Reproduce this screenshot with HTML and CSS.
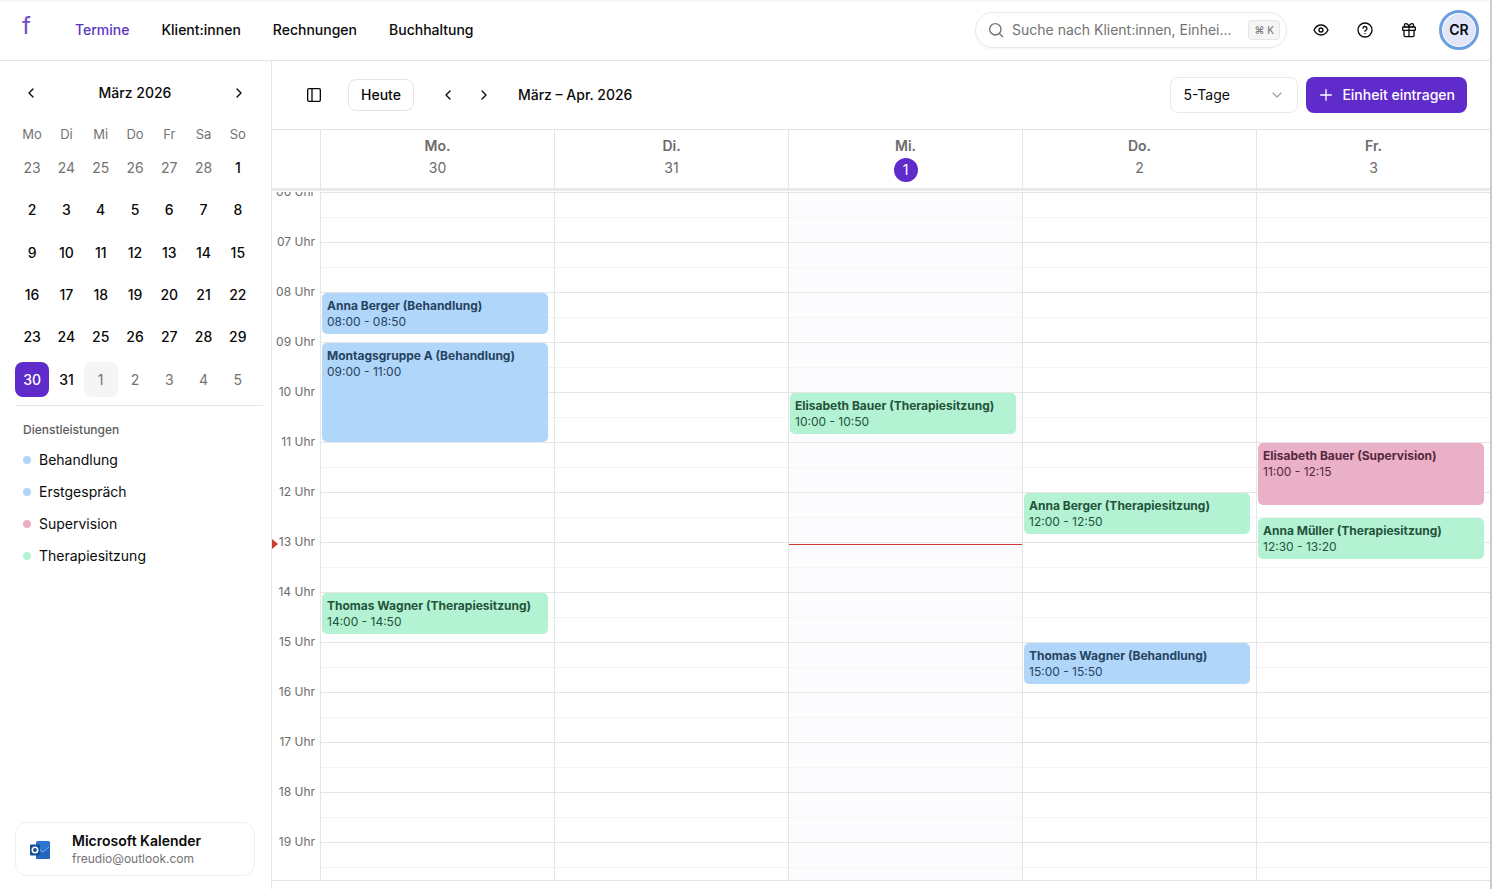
FILE: index.html
```html
<!DOCTYPE html>
<html lang="de">
<head>
    <meta charset="UTF-8">
    <meta name="viewport" content="width=device-width, initial-scale=1.0">
    <title>Termine</title>
    <link rel="stylesheet" href="styles.css">
</head>
<body>
    <header class="topbar">
        <a class="logo" href="#">f</a>
        <nav class="main-nav">
            <a class="active" href="#">Termine</a>
            <a href="#">Klient:innen</a>
            <a href="#">Rechnungen</a>
            <a href="#">Buchhaltung</a>
        </nav>
        <label class="search">
            <svg class="icon" viewBox="0 0 24 24"><circle cx="11" cy="11" r="8.5"/><path d="M17.2 17.2 22 22"/></svg>
            <input type="text" placeholder="Suche nach Klient:innen, Einhei..." aria-label="Suche">
            <kbd>⌘ K</kbd>
        </label>
        <div class="top-actions">
            <button class="icon-btn" aria-label="Ansicht">
                <svg class="icon" viewBox="0 0 24 24"><path d="M1.500 12s3.800-7.500 10.500-7.500S22.500 12 22.500 12s-3.800 7.500-10.500 7.500S1.500 12 1.500 12Z"/><circle cx="12" cy="12" r="3"/></svg>
            </button>
            <button class="icon-btn" aria-label="Hilfe">
                <svg class="icon" viewBox="0 0 24 24"><circle cx="12" cy="12" r="10.500"/><path d="M9 9a3 3 0 0 1 5.900 1c0 2-2.900 2.500-2.900 4"/><path d="M12 17.500h.01"/></svg>
            </button>
            <button class="icon-btn" aria-label="Neuigkeiten">
                <svg class="icon" viewBox="0 0 24 24"><rect x="2.500" y="7.500" width="19" height="5" rx="1"/><path d="M12 7.500V22M4.500 12.500V20a2 2 0 0 0 2 2h11a2 2 0 0 0 2-2v-7.500M7.500 7.500a2.500 2.500 0 0 1 0-5C11 2.500 12 7.500 12 7.500s1-5 4.500-5a2.500 2.500 0 0 1 0 5"/></svg>
            </button>
        </div>
        <button class="avatar">CR</button>
    </header>

    <div class="layout">
        <aside class="sidebar">
            <div class="month-nav">
                <button class="icon-btn" aria-label="Vorheriger Monat"><svg class="icon" viewBox="0 0 24 24"><path d="m15 6-6 6 6 6"/></svg></button>
                <h2>März 2026</h2>
                <button class="icon-btn" aria-label="Nächster Monat"><svg class="icon" viewBox="0 0 24 24"><path d="m9 6 6 6-6 6"/></svg></button>
            </div>
            <table class="mini-cal">
                <thead>
                    <tr><th>Mo</th><th>Di</th><th>Mi</th><th>Do</th><th>Fr</th><th>Sa</th><th>So</th></tr>
                </thead>
                <tbody>
                    <tr>
                        <td><button class="out">23</button></td><td><button class="out">24</button></td><td><button class="out">25</button></td><td><button class="out">26</button></td><td><button class="out">27</button></td><td><button class="out">28</button></td><td><button>1</button></td>
                    </tr>
                    <tr>
                        <td><button>2</button></td><td><button>3</button></td><td><button>4</button></td><td><button>5</button></td><td><button>6</button></td><td><button>7</button></td><td><button>8</button></td>
                    </tr>
                    <tr>
                        <td><button>9</button></td><td><button>10</button></td><td><button>11</button></td><td><button>12</button></td><td><button>13</button></td><td><button>14</button></td><td><button>15</button></td>
                    </tr>
                    <tr>
                        <td><button>16</button></td><td><button>17</button></td><td><button>18</button></td><td><button>19</button></td><td><button>20</button></td><td><button>21</button></td><td><button>22</button></td>
                    </tr>
                    <tr>
                        <td><button>23</button></td><td><button>24</button></td><td><button>25</button></td><td><button>26</button></td><td><button>27</button></td><td><button>28</button></td><td><button>29</button></td>
                    </tr>
                    <tr>
                        <td><button class="selected">30</button></td><td><button>31</button></td><td><button class="out today">1</button></td><td><button class="out">2</button></td><td><button class="out">3</button></td><td><button class="out">4</button></td><td><button class="out">5</button></td>
                    </tr>
                </tbody>
            </table>
            <section class="services">
                <h3>Dienstleistungen</h3>
                <ul>
                    <li class="dot-blue">Behandlung</li>
                    <li class="dot-blue">Erstgespräch</li>
                    <li class="dot-pink">Supervision</li>
                    <li class="dot-green">Therapiesitzung</li>
                </ul>
            </section>
            <div class="account">
                <svg class="outlook" viewBox="0 0 20 18">
                    <rect x="6" y="0" width="14" height="18" rx="1.500" fill="#2b74cf"/>
                    <path d="M6 8l5 3.500L20 5v11.500a1.500 1.500 0 0 1-1.500 1.500h-11A1.500 1.500 0 0 1 6 16.500Z" fill="#2567bd"/>
                    <path d="M10 8.500 13 11l6-5" fill="none" stroke="#6fb2f2" stroke-width="1"/>
                    <rect x="0" y="3.500" width="10" height="11" rx="1" fill="#174f96"/>
                    <circle cx="5" cy="9" r="2.700" fill="none" stroke="#fff" stroke-width="1.600"/>
                </svg>
                <div>
                    <strong>Microsoft Kalender</strong>
                    <span>freudio@outlook.com</span>
                </div>
            </div>
        </aside>

        <main class="calendar">
            <div class="toolbar">
                <button class="icon-btn toggle" aria-label="Seitenleiste"><svg class="icon" viewBox="0 0 24 24"><rect x="2.500" y="2.500" width="19" height="19" rx="2"/><path d="M9 2.500v19"/></svg></button>
                <button class="btn-outline">Heute</button>
                <div class="range-nav">
                    <button class="icon-btn" aria-label="Zurück"><svg class="icon" viewBox="0 0 24 24"><path d="m15 6-6 6 6 6"/></svg></button>
                    <button class="icon-btn" aria-label="Weiter"><svg class="icon" viewBox="0 0 24 24"><path d="m9 6 6 6-6 6"/></svg></button>
                </div>
                <h1>März – Apr. 2026</h1>
                <div class="view-select">
                    <select aria-label="Ansicht">
                        <option>5-Tage</option>
                    </select>
                    <svg class="icon" viewBox="0 0 24 24"><path d="m6 9 6 6 6-6"/></svg>
                </div>
                <button class="btn-primary"><svg class="icon" viewBox="0 0 24 24"><path d="M4 12h16M12 4v16"/></svg>Einheit eintragen</button>
            </div>

            <div class="week-head">
                <div></div>
                <div><b>Mo.</b><span>30</span></div>
                <div><b>Di.</b><span>31</span></div>
                <div><b>Mi.</b><span class="now-day">1</span></div>
                <div><b>Do.</b><span>2</span></div>
                <div><b>Fr.</b><span>3</span></div>
            </div>

            <div class="week-body">
                <div class="hours">
                    <span>06 Uhr</span>
                    <span>07 Uhr</span>
                    <span>08 Uhr</span>
                    <span>09 Uhr</span>
                    <span>10 Uhr</span>
                    <span>11 Uhr</span>
                    <span>12 Uhr</span>
                    <span>13 Uhr</span>
                    <span>14 Uhr</span>
                    <span>15 Uhr</span>
                    <span>16 Uhr</span>
                    <span>17 Uhr</span>
                    <span>18 Uhr</span>
                    <span>19 Uhr</span>
                    <i class="now-arrow" style="--start: 422"></i>
                </div>
                <!-- --start = minutes since 06:00, --len = duration in minutes -->
                <div class="day">
                    <div class="event blue" style="--start: 120; --len: 50"><b>Anna Berger (Behandlung)</b><span>08:00 - 08:50</span></div>
                    <div class="event blue" style="--start: 180; --len: 120"><b>Montagsgruppe A (Behandlung)</b><span>09:00 - 11:00</span></div>
                    <div class="event green" style="--start: 480; --len: 50"><b>Thomas Wagner (Therapiesitzung)</b><span>14:00 - 14:50</span></div>
                </div>
                <div class="day"></div>
                <div class="day is-today">
                    <div class="event green" style="--start: 240; --len: 50"><b>Elisabeth Bauer (Therapiesitzung)</b><span>10:00 - 10:50</span></div>
                    <i class="now-line" style="--start: 422"></i>
                </div>
                <div class="day">
                    <div class="event green" style="--start: 360; --len: 50"><b>Anna Berger (Therapiesitzung)</b><span>12:00 - 12:50</span></div>
                    <div class="event blue" style="--start: 540; --len: 50"><b>Thomas Wagner (Behandlung)</b><span>15:00 - 15:50</span></div>
                </div>
                <div class="day">
                    <div class="event pink" style="--start: 300; --len: 75"><b>Elisabeth Bauer (Supervision)</b><span>11:00 - 12:15</span></div>
                    <div class="event green" style="--start: 390; --len: 50"><b>Anna Müller (Therapiesitzung)</b><span>12:30 - 13:20</span></div>
                </div>
            </div>
        </main>
    </div>
</body>
</html>
```

FILE: styles.css
```css
* {
    box-sizing: border-box;
}
body {
    margin: 0;
    height: 100vh;
    display: flex;
    flex-direction: column;
    overflow: hidden;
    font-family: Inter, 'Liberation Sans', sans-serif;
    font-size: 14px;
    line-height: 20px;
    color: #0a0a0a;
    background: #fff;
    border-right: 2px solid #cfcad2;
}
h1, h2, h3, ul {
    margin: 0;
    padding: 0;
    font-size: 14px;
    font-weight: 500;
}
a {
    color: inherit;
    text-decoration: none;
}
button, input, select {
    font: inherit;
    color: inherit;
    margin: 0;
    padding: 0;
    border: none;
    background: none;
}
button {
    cursor: pointer;
}
.icon {
    width: 16px;
    height: 16px;
    flex: none;
    fill: none;
    stroke: currentColor;
    stroke-width: 2;
    stroke-linecap: round;
    stroke-linejoin: round;
}
.icon-btn {
    width: 32px;
    height: 32px;
    display: flex;
    align-items: center;
    justify-content: center;
}

/* top bar */
.topbar {
    height: 61px;
    flex: none;
    display: flex;
    align-items: center;
    padding: 0 11px 0 22px;
    border-bottom: 1px solid #e5e5e5;
    box-shadow: inset 0 2px #f6f6f6;
}
.logo {
    width: 53px;
    height: 28px;
    font-size: 24px;
    color: #6a4fc4;
}
.main-nav {
    display: flex;
    gap: 32px;
    font-weight: 500;
}
.main-nav .active {
    color: #5b35c0;
}
.search {
    width: 312px;
    height: 36px;
    margin-left: auto;
    padding: 0 6px 0 12px;
    display: flex;
    align-items: center;
    gap: 8px;
    color: #737373;
    border: 1px solid #e9e9e9;
    border-radius: 18px;
    box-shadow: 0 1px 2px rgba(0, 0, 0, 0.05);
}
.search input {
    flex: 1;
    min-width: 0;
    outline: none;
}
.search input::placeholder {
    color: #737373;
    opacity: 1;
}
.search .icon {
    stroke-width: 2;
}
kbd {
    height: 20px;
    padding: 0 5px;
    font-family: Inter, 'DejaVu Sans', sans-serif;
    font-size: 10px;
    line-height: 18px;
    background: #f5f5f5;
    border: 1px solid #e5e5e5;
    border-radius: 4px;
}
.top-actions {
    display: flex;
    gap: 12px;
    margin: 0 14px 0 18px;
}
.avatar {
    width: 40px;
    height: 40px;
    font-weight: 600;
    background: #e0e5f7;
    border: 3px solid #6c9fdf;
    border-radius: 50%;
    box-shadow: inset 0 0 0 1px #fff;
}

/* sidebar */
.layout {
    flex: 1;
    min-height: 0;
    display: flex;
}
.sidebar {
    width: 272px;
    flex: none;
    display: flex;
    flex-direction: column;
    padding: 16px 16px 13px 15px;
    border-right: 1px solid #e5e5e5;
}
.month-nav {
    display: flex;
    align-items: center;
    justify-content: space-between;
    padding-bottom: 16px;
}
.mini-cal {
    display: block;
    padding-bottom: 8px;
}
.mini-cal thead,
.mini-cal tbody {
    display: block;
}
.mini-cal tr {
    display: grid;
    grid-template-columns: repeat(7, 1fr);
    margin-bottom: 8px;
}
.mini-cal tbody tr:last-child {
    margin-bottom: 0;
}
.mini-cal th {
    padding: 0;
    font-size: 13px;
    font-weight: 400;
    line-height: 18px;
    color: #737373;
}
.mini-cal td {
    padding: 0;
}
.mini-cal button {
    width: 100%;
    aspect-ratio: 1;
    display: block;
    font-weight: 500;
    border-radius: 8px;
}
.mini-cal .out {
    font-weight: 400;
    color: #737373;
}
.mini-cal .today {
    background: #f5f5f5;
}
.mini-cal .selected {
    color: #fff;
    background: #5f2bcb;
}
.month-nav, .mini-cal, .account {
    width: 240px;
}
.services {
    margin-right: -8px;
    padding: 14px 8px;
    border-top: 1px solid #e5e5e5;
}
.services h3 {
    font-size: 12px;
    color: #5c5c5c;
    padding-bottom: 4px;
}
.services li {
    list-style: none;
    display: flex;
    align-items: center;
    gap: 8px;
    height: 32px;
    font-weight: 400;
}
.services li::before {
    content: '';
    width: 8px;
    height: 8px;
    border-radius: 50%;
}
.services .dot-blue::before {
    background: #b0d6fa;
}
.services .dot-pink::before {
    background: #e9b0c8;
}
.services .dot-green::before {
    background: #b3f2d3;
}
.account {
    margin-top: auto;
    height: 54px;
    padding: 2px 14px 0;
    display: flex;
    align-items: center;
    gap: 22px;
    border: 1px solid #efefef;
    border-radius: 12px;
}
.outlook {
    width: 20px;
    height: 18px;
}
.account strong, .account span {
    display: block;
    line-height: 18px;
}
.account strong {
    font-weight: 600;
}
.account span {
    font-size: 12px;
    color: #737373;
}

/* calendar */
.calendar {
    flex: 1;
    min-width: 0;
    display: flex;
    flex-direction: column;
    padding-bottom: 8px;
}
.toolbar {
    height: 68px;
    flex: none;
    display: flex;
    align-items: center;
    padding: 0 23px 0 26px;
}
.btn-outline {
    height: 32px;
    margin: 0 18px;
    padding: 0 12px;
    font-weight: 500;
    border: 1px solid #e5e5e5;
    border-radius: 8px;
}
.range-nav {
    display: flex;
    gap: 4px;
    padding-right: 18px;
}
.view-select {
    position: relative;
    width: 128px;
    margin: 0 8px 0 auto;
}
.view-select select {
    appearance: none;
    width: 100%;
    height: 36px;
    padding: 0 12px;
    border: 1px solid #e9e9e9;
    border-radius: 8px;
    background: #fff;
}
.view-select .icon {
    position: absolute;
    right: 13px;
    top: 10px;
    color: #a3a3a3;
    pointer-events: none;
}
.btn-primary {
    height: 36px;
    padding: 0 12px;
    display: flex;
    align-items: center;
    gap: 8px;
    font-weight: 500;
    color: #fff;
    background: #5f2bcb;
    border-radius: 8px;
}
.week-head, .week-body {
    display: grid;
    grid-template-columns: 48px repeat(5, 1fr);
}
.week-head {
    height: 62px;
    flex: none;
    margin-bottom: 1px;
    border-top: 1px solid #e5e5e5;
    border-bottom: 3px solid #e8e8e8;
    color: #6b6b6b;
    text-align: center;
}
.week-head div {
    display: flex;
    flex-direction: column;
    align-items: center;
    padding-top: 6px;
}
.week-head div + div {
    border-left: 1px solid #e5e5e5;
}
.week-head b {
    font-weight: 600;
}
.week-head span {
    line-height: 24px;
}
.week-head .now-day {
    width: 24px;
    height: 24px;
    margin-top: 2px;
    color: #fff;
    background: #5f2bcb;
    border-radius: 50%;
}
.week-body {
    position: relative;
    flex: 1;
    min-height: 0;
    overflow: hidden;
    border-bottom: 1px solid #e5e5e5;
}
.hours {
    position: relative;
    padding-right: 5px;
    font-size: 12px;
    color: #6b6b6b;
    text-align: right;
}
.hours span {
    display: block;
    height: 50px;
    margin-top: -10px;
    margin-bottom: 10px;
}
.day {
    position: relative;
    border-left: 1px solid #e5e5e5;
    background: repeating-linear-gradient(#e5e5e5 0 1px, transparent 1px 25px, #f4f4f4 25px 26px, transparent 26px 50px);
}
.day.is-today {
    background-color: #fcfcfe;
}
.event {
    position: absolute;
    left: 1px;
    right: 6px;
    top: calc(var(--start) * 50px / 60 + 1px);
    height: calc(var(--len) * 50px / 60 - 1px);
    padding: 5px;
    font-size: 12px;
    line-height: 16px;
    border-radius: 5px;
    overflow: hidden;
}
.event b, .event span {
    display: block;
    white-space: nowrap;
}
.event b {
    font-weight: 700;
}
.blue {
    color: #26435f;
    background: #b0d6fa;
}
.green {
    color: #24533c;
    background: #b3f2d3;
}
.pink {
    color: #56283c;
    background: #e9b0c8;
}
.now-line {
    position: absolute;
    left: 0;
    right: 0;
    top: calc(var(--start) * 50px / 60);
    border-top: 1px solid #cf3a34;
}
.now-arrow {
    position: absolute;
    left: 0;
    top: calc(var(--start) * 50px / 60 - 5px);
    border: 5px solid transparent;
    border-left: 6px solid #cf3a34;
    border-right: none;
}
```
